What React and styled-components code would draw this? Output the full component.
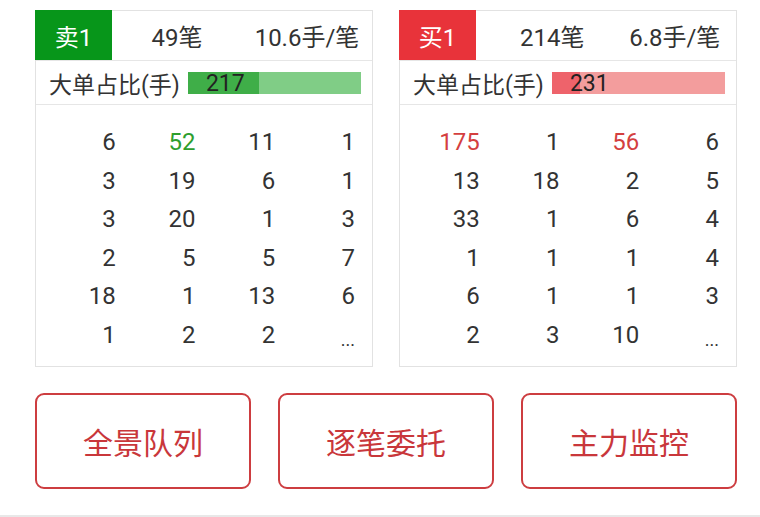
import styled, { createGlobalStyle } from "styled-components";

const GlobalStyle = createGlobalStyle`
  html, body {
    margin: 0;
    padding: 0;
    background: #ffffff;
  }
  body {
    font-family: Roboto, "Noto Sans CJK SC", sans-serif;
    color: #333333;
  }
`;

const GREEN = "#07961a";
const RED = "#e8333a";

const panels = [
  {
    side: "卖1",
    color: GREEN,
    count: "49笔",
    avg: "10.6手/笔",
    statsPad: 0,
    big: 217,
    fill: 41,
    barDark: "#3fae48",
    barLight: "#80cd86",
    hot: "#2e9e2e",
    rows: [
      [6, 52, 11, 1],
      [3, 19, 6, 1],
      [3, 20, 1, 3],
      [2, 5, 5, 7],
      [18, 1, 13, 6],
      [1, 2, 2, "..."],
    ],
    hotCells: ["0-1"],
  },
  {
    side: "买1",
    color: RED,
    count: "214笔",
    avg: "6.8手/笔",
    statsPad: 15,
    big: 231,
    fill: 16,
    barDark: "#ee636b",
    barLight: "#f39d9d",
    hot: "#d43f3f",
    rows: [
      [175, 1, 56, 6],
      [13, 18, 2, 5],
      [33, 1, 6, 4],
      [1, 1, 1, 4],
      [6, 1, 1, 3],
      [2, 3, 10, "..."],
    ],
    hotCells: ["0-0", "0-2"],
  },
];

const actions = ["全景队列", "逐笔委托", "主力监控"];

function QueuePanel({ data }) {
  return (
    <Panel>
      <HeadRow>
        <SideCell color={data.color}>{data.side}</SideCell>
        <Stats pad={data.statsPad}>
          <Stat>{data.count}</Stat>
          <Stat>{data.avg}</Stat>
        </Stats>
      </HeadRow>
      <RatioRow>
        <RatioLabel>大单占比(手)</RatioLabel>
        <Bar light={data.barLight}>
          <BarFill color={data.barDark} style={{ width: `${data.fill}%` }} />
          <BarValue>{data.big}</BarValue>
        </Bar>
      </RatioRow>
      <Grid>
        {data.rows.map((row, r) =>
          row.map((v, c) => (
            <Cell
              key={`${r}-${c}`}
              color={data.hotCells.includes(`${r}-${c}`) ? data.hot : undefined}
              dots={v === "..."}
            >
              {v}
            </Cell>
          ))
        )}
      </Grid>
    </Panel>
  );
}

export default function App() {
  return (
    <>
      <GlobalStyle />
      <Page>
        <Panels>
          {panels.map((p) => (
            <QueuePanel key={p.side} data={p} />
          ))}
        </Panels>
        <Actions>
          {actions.map((a) => (
            <ActionButton key={a}>{a}</ActionButton>
          ))}
        </Actions>
      </Page>
      <BottomLine />
    </>
  );
}

const Page = styled.div`
  padding: 10px 22px 0 35px;
  display: flex;
  flex-direction: column;
`;

const Panels = styled.div`
  display: grid;
  grid-template-columns: 338px 338px;
  column-gap: 26px;
`;

const Panel = styled.div`
  border: 1px solid #e2e2e2;
  display: flex;
  flex-direction: column;
`;

const HeadRow = styled.div`
  height: 49px;
  display: flex;
  align-items: stretch;
  border-bottom: 1px solid #e6e6e6;
`;

const SideCell = styled.div`
  width: 77px;
  margin: -1px 0 0 -1px;
  display: flex;
  align-items: center;
  justify-content: center;
  background-color: ${(props) => props.color};
  color: #ffffff;
  font-size: 24px;
`;

const Stats = styled.div`
  flex: 1;
  display: grid;
  grid-template-columns: 1fr 1fr;
  align-items: center;
  padding-left: ${(props) => props.pad}px;
`;

const Stat = styled.div`
  text-align: center;
  font-size: 24px;
  color: #333333;
  white-space: nowrap;
`;

const RatioRow = styled.div`
  height: 43px;
  display: flex;
  align-items: center;
  padding: 0 11px 0 13px;
  border-bottom: 1px solid #e6e6e6;
`;

const RatioLabel = styled.div`
  font-size: 23px;
  color: #333333;
  white-space: nowrap;
  margin-right: 8px;
`;

const Bar = styled.div`
  position: relative;
  flex: 1;
  height: 22px;
  background-color: ${(props) => props.light};
`;

const BarFill = styled.div`
  height: 100%;
  background-color: ${(props) => props.color};
`;

const BarValue = styled.span`
  position: absolute;
  left: 18px;
  top: 50%;
  transform: translateY(-50%);
  font-size: 23px;
  line-height: 1;
  color: #222222;
`;

const Grid = styled.div`
  display: grid;
  grid-template-columns: repeat(4, 1fr);
  grid-auto-rows: 38.5px;
  padding: 18px 17px 12px 0;
`;

const Cell = styled.div`
  display: flex;
  align-items: ${(props) => (props.dots ? "flex-end" : "center")};
  justify-content: flex-end;
  padding-bottom: ${(props) => (props.dots ? "4px" : "0")};
  font-size: ${(props) => (props.dots ? "18px" : "24px")};
  color: ${(props) => props.color || "#333333"};
`;

const Actions = styled.div`
  margin-top: 26px;
  display: grid;
  grid-template-columns: repeat(3, 216px);
  column-gap: 27px;
`;

const ActionButton = styled.button`
  height: 96px;
  border: 2px solid #cd3d40;
  border-radius: 9px;
  background: #ffffff;
  color: #c9373b;
  font-family: "Noto Sans CJK SC", sans-serif;
  font-size: 30px;
  cursor: pointer;
`;

const BottomLine = styled.div`
  margin-top: 26px;
  height: 2px;
  background-color: #e8e8e8;
`;
